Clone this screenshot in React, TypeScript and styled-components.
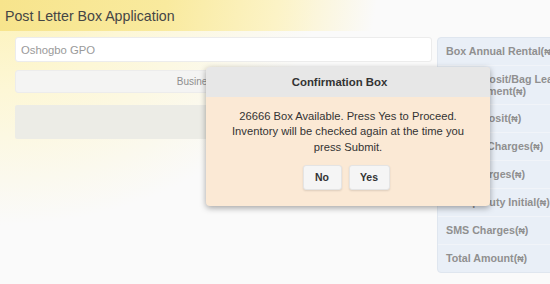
import React from 'react';
import styled, { createGlobalStyle } from 'styled-components';

const GlobalStyle = createGlobalStyle`
  html, body {
    margin: 0;
    padding: 0;
    overflow: hidden;
    background: #fafafa;
    font-family: "Liberation Sans", Arial, sans-serif;
  }
`;

const Page = styled.div`
  position: relative;
  width: 550px;
  height: 284px;
  overflow: hidden;
  background:
    radial-gradient(ellipse 420px 300px at 0 0, #fcf2b8 0%, #fdf7d6 30%, rgba(250, 250, 250, 0) 75%),
    #fafafa;
`;

const Header = styled.div`
  height: 31px;
  display: flex;
  align-items: center;
  padding-left: 5px;
  background: linear-gradient(100deg, #f7e48c 0%, #f9ea9e 30%, #fcf3c6 50%, rgba(255, 255, 255, 0) 68%);
`;

const Title = styled.h1`
  margin: 0;
  font-size: 14.2px;
  font-weight: 400;
  color: #454545;
`;

const Content = styled.div`
  display: flex;
  gap: 5px;
  padding: 6px 0 0 15px;
`;

const LeftCol = styled.div`
  width: 417px;
  flex-shrink: 0;
  display: flex;
  flex-direction: column;
`;

const Field = styled.input`
  box-sizing: border-box;
  height: 25px;
  width: 100%;
  padding: 0 5px;
  border: 1px solid #ececec;
  border-radius: 3px;
  background: #fff;
  font-family: inherit;
  font-size: 11.3px;
  color: #9a9a9a;
  outline: none;
`;

const TabButton = styled.button`
  box-sizing: border-box;
  margin-top: 8px;
  height: 23px;
  width: 100%;
  border: 1px solid #ececec;
  border-radius: 3px;
  background: #f4f4f3;
  font-family: inherit;
  font-size: 10px;
  color: #8f8f8f;
  text-align: center;
`;

const Block = styled.div`
  margin-top: 12px;
  height: 34px;
  border-radius: 2px;
  background: #ecece6;
`;

const Panel = styled.div`
  width: 170px;
  flex-shrink: 0;
  border: 1px solid #dfe6ef;
  border-radius: 4px;
  overflow: hidden;
  background: #e9eff7;
`;

const Row = styled.div<{ $tight?: boolean }>`
  padding: 7px 8px;
  line-height: ${(p) => (p.$tight ? '12px' : '13px')};
  font-size: 10.7px;
  font-weight: 700;
  color: #909090;
  white-space: nowrap;
  & + & {
    border-top: 1px solid #f1f4f9;
  }
`;

const Naira = styled.span`
  font-size: 0.82em;
  line-height: 0;
`;

const Modal = styled.div`
  position: absolute;
  left: 206px;
  top: 67px;
  width: 284px;
  border-radius: 4px;
  overflow: hidden;
  box-shadow: 0 2px 6px rgba(0, 0, 0, 0.35);
  background: #fbe9d5;
`;

const ModalHead = styled.div`
  height: 30px;
  display: flex;
  align-items: center;
  justify-content: center;
  padding-right: 17px;
  background: #e7e7e7;
  font-size: 11.4px;
  font-weight: 700;
  color: #333;
`;

const ModalBody = styled.div`
  padding: 12px 8px 16px;
  text-align: center;
  font-size: 11.2px;
  line-height: 15.3px;
  color: #333;
`;

const Actions = styled.div`
  display: flex;
  justify-content: center;
  gap: 7px;
  margin-top: 10px;
  padding-right: 4px;
`;

const ModalButton = styled.button<{ $w: number }>`
  box-sizing: border-box;
  width: ${(p) => p.$w}px;
  height: 25px;
  border: 1px solid #e4e4e4;
  border-radius: 3px;
  background: #f5f5f5;
  box-shadow: 0 1px 2px rgba(0, 0, 0, 0.12);
  font-family: inherit;
  font-size: 10.5px;
  font-weight: 700;
  color: #333;
`;

const rows = [
  'Key Deposit',
  'Service Charges',
  'VAT Charges',
  'Stamp Duty Initial',
  'SMS Charges',
  'Total Amount',
];

export default function App() {
  return (
    <Page>
      <GlobalStyle />
      <Header>
        <Title>Post Letter Box Application</Title>
      </Header>
      <Content>
        <LeftCol>
          <Field readOnly value="Oshogbo GPO" />
          <TabButton>Business Information</TabButton>
          <Block />
        </LeftCol>
        <Panel>
          <Row>
            Box Annual Rental(<Naira>₦</Naira>)
          </Row>
          <Row $tight>
            Box Deposit/Bag Lease
            <br />
            Replacement(<Naira>₦</Naira>)
          </Row>
          {rows.map((r) => (
            <Row key={r}>
              {r}(<Naira>₦</Naira>)
            </Row>
          ))}
        </Panel>
      </Content>
      <Modal>
        <ModalHead>Confirmation Box</ModalHead>
        <ModalBody>
          26666 Box Available. Press Yes to Proceed.
          <br />
          Inventory will be checked again at the time you
          <br />
          press Submit.
          <Actions>
            <ModalButton $w={39}>No</ModalButton>
            <ModalButton $w={41}>Yes</ModalButton>
          </Actions>
        </ModalBody>
      </Modal>
    </Page>
  );
}
